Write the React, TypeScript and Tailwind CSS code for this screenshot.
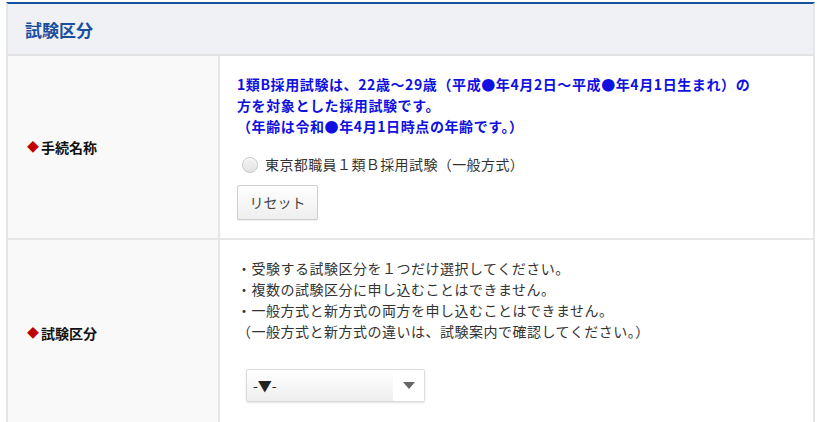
import React from "react";

const font = { fontFamily: '"Noto Sans CJK JP", "Noto Sans", sans-serif' };

export default function App() {
  return (
    <div className="bg-white w-[817px] h-[422px] overflow-hidden pt-[2px] pl-[6px]" style={font}>
      <div className="w-[809px] border-t-2 border-t-[#1553a0] border-x-2 border-x-[#e6e6e6]">
        <div className="h-[52px] bg-[#eff1f4] border-b-2 border-b-[#e3e3e3] flex items-center pl-[17px]">
          <span className="text-[17px] font-bold text-[#1a4f9f] leading-none">試験区分</span>
        </div>

        <div className="flex border-b-2 border-b-[#e6e6e6]">
          <div className="w-[212px] shrink-0 bg-[#f9f9f9] border-r-2 border-r-[#e6e6e6] flex items-center pl-[19px]">
            <span className="text-[#c00000] text-[12px] leading-none mr-[2px]">◆</span>
            <span className="text-[14px] font-bold text-[#111]">手続名称</span>
          </div>
          <div className="flex-1 pl-[17px] pt-[18px] pb-[18px]">
            <div className="text-[14px] leading-[21px] font-bold text-[#1010e0] whitespace-nowrap tracking-[0.6px]">
              1類B採用試験は、22歳～29歳（平成●年4月2日～平成●年4月1日生まれ）の
              <br />
              方を対象とした採用試験です。
              <br />
              （年齢は令和●年4月1日時点の年齢です。）
            </div>
            <div className="mt-[17px] flex items-center h-[21px]">
              <span className="ml-[5px] w-[16px] h-[16px] rounded-full border border-[#c8c8c8] bg-gradient-to-b from-[#f4f4f4] to-[#e2e2e2] shadow-[inset_0_1px_1px_rgba(255,255,255,0.9)]" />
              <span className="ml-[7px] text-[14px] text-[#333] tracking-[0.4px]">東京都職員１類Ｂ採用試験（一般方式）</span>
            </div>
            <button className="mt-[10px] w-[81px] h-[35px] border border-[#cfcfcf] rounded-[2px] bg-gradient-to-b from-[#ffffff] to-[#eeeeee] shadow-[0_1px_1px_rgba(0,0,0,0.08)] text-[14px] text-[#444] flex items-center justify-center" style={font}>
              リセット
            </button>
          </div>
        </div>

        <div className="flex">
          <div className="w-[212px] shrink-0 bg-[#f9f9f9] border-r-2 border-r-[#e6e6e6] flex items-center pl-[19px]">
            <span className="text-[#c00000] text-[12px] leading-none mr-[2px]">◆</span>
            <span className="text-[14px] font-bold text-[#111]">試験区分</span>
          </div>
          <div className="flex-1 pl-[17px] pt-[18px] pb-[24px]">
            <div className="text-[14px] leading-[21px] text-[#333] whitespace-nowrap tracking-[0.5px]">
              <div>・受験する試験区分を１つだけ選択してください。</div>
              <div>・複数の試験区分に申し込むことはできません。</div>
              <div>・一般方式と新方式の両方を申し込むことはできません。</div>
              <div>（一般方式と新方式の違いは、試験案内で確認してください。）</div>
            </div>
            <div className="mt-[27px] ml-[9px] w-[179px] h-[33px] border border-[#dcdcdc] rounded-[2px] bg-gradient-to-b from-[#ffffff] to-[#eeeeee] shadow-[0_1px_2px_rgba(0,0,0,0.12)] flex items-center">
              <span className="flex-1 pl-[6px] text-[14px] text-[#222]">-▼-</span>
              <span className="w-[31px] h-full bg-white flex items-center justify-center">
                <svg width="12" height="7" viewBox="0 0 12 7">
                  <path d="M0 0 L12 0 L6 7 Z" fill="#666" />
                </svg>
              </span>
            </div>
          </div>
        </div>
      </div>
    </div>
  );
}
